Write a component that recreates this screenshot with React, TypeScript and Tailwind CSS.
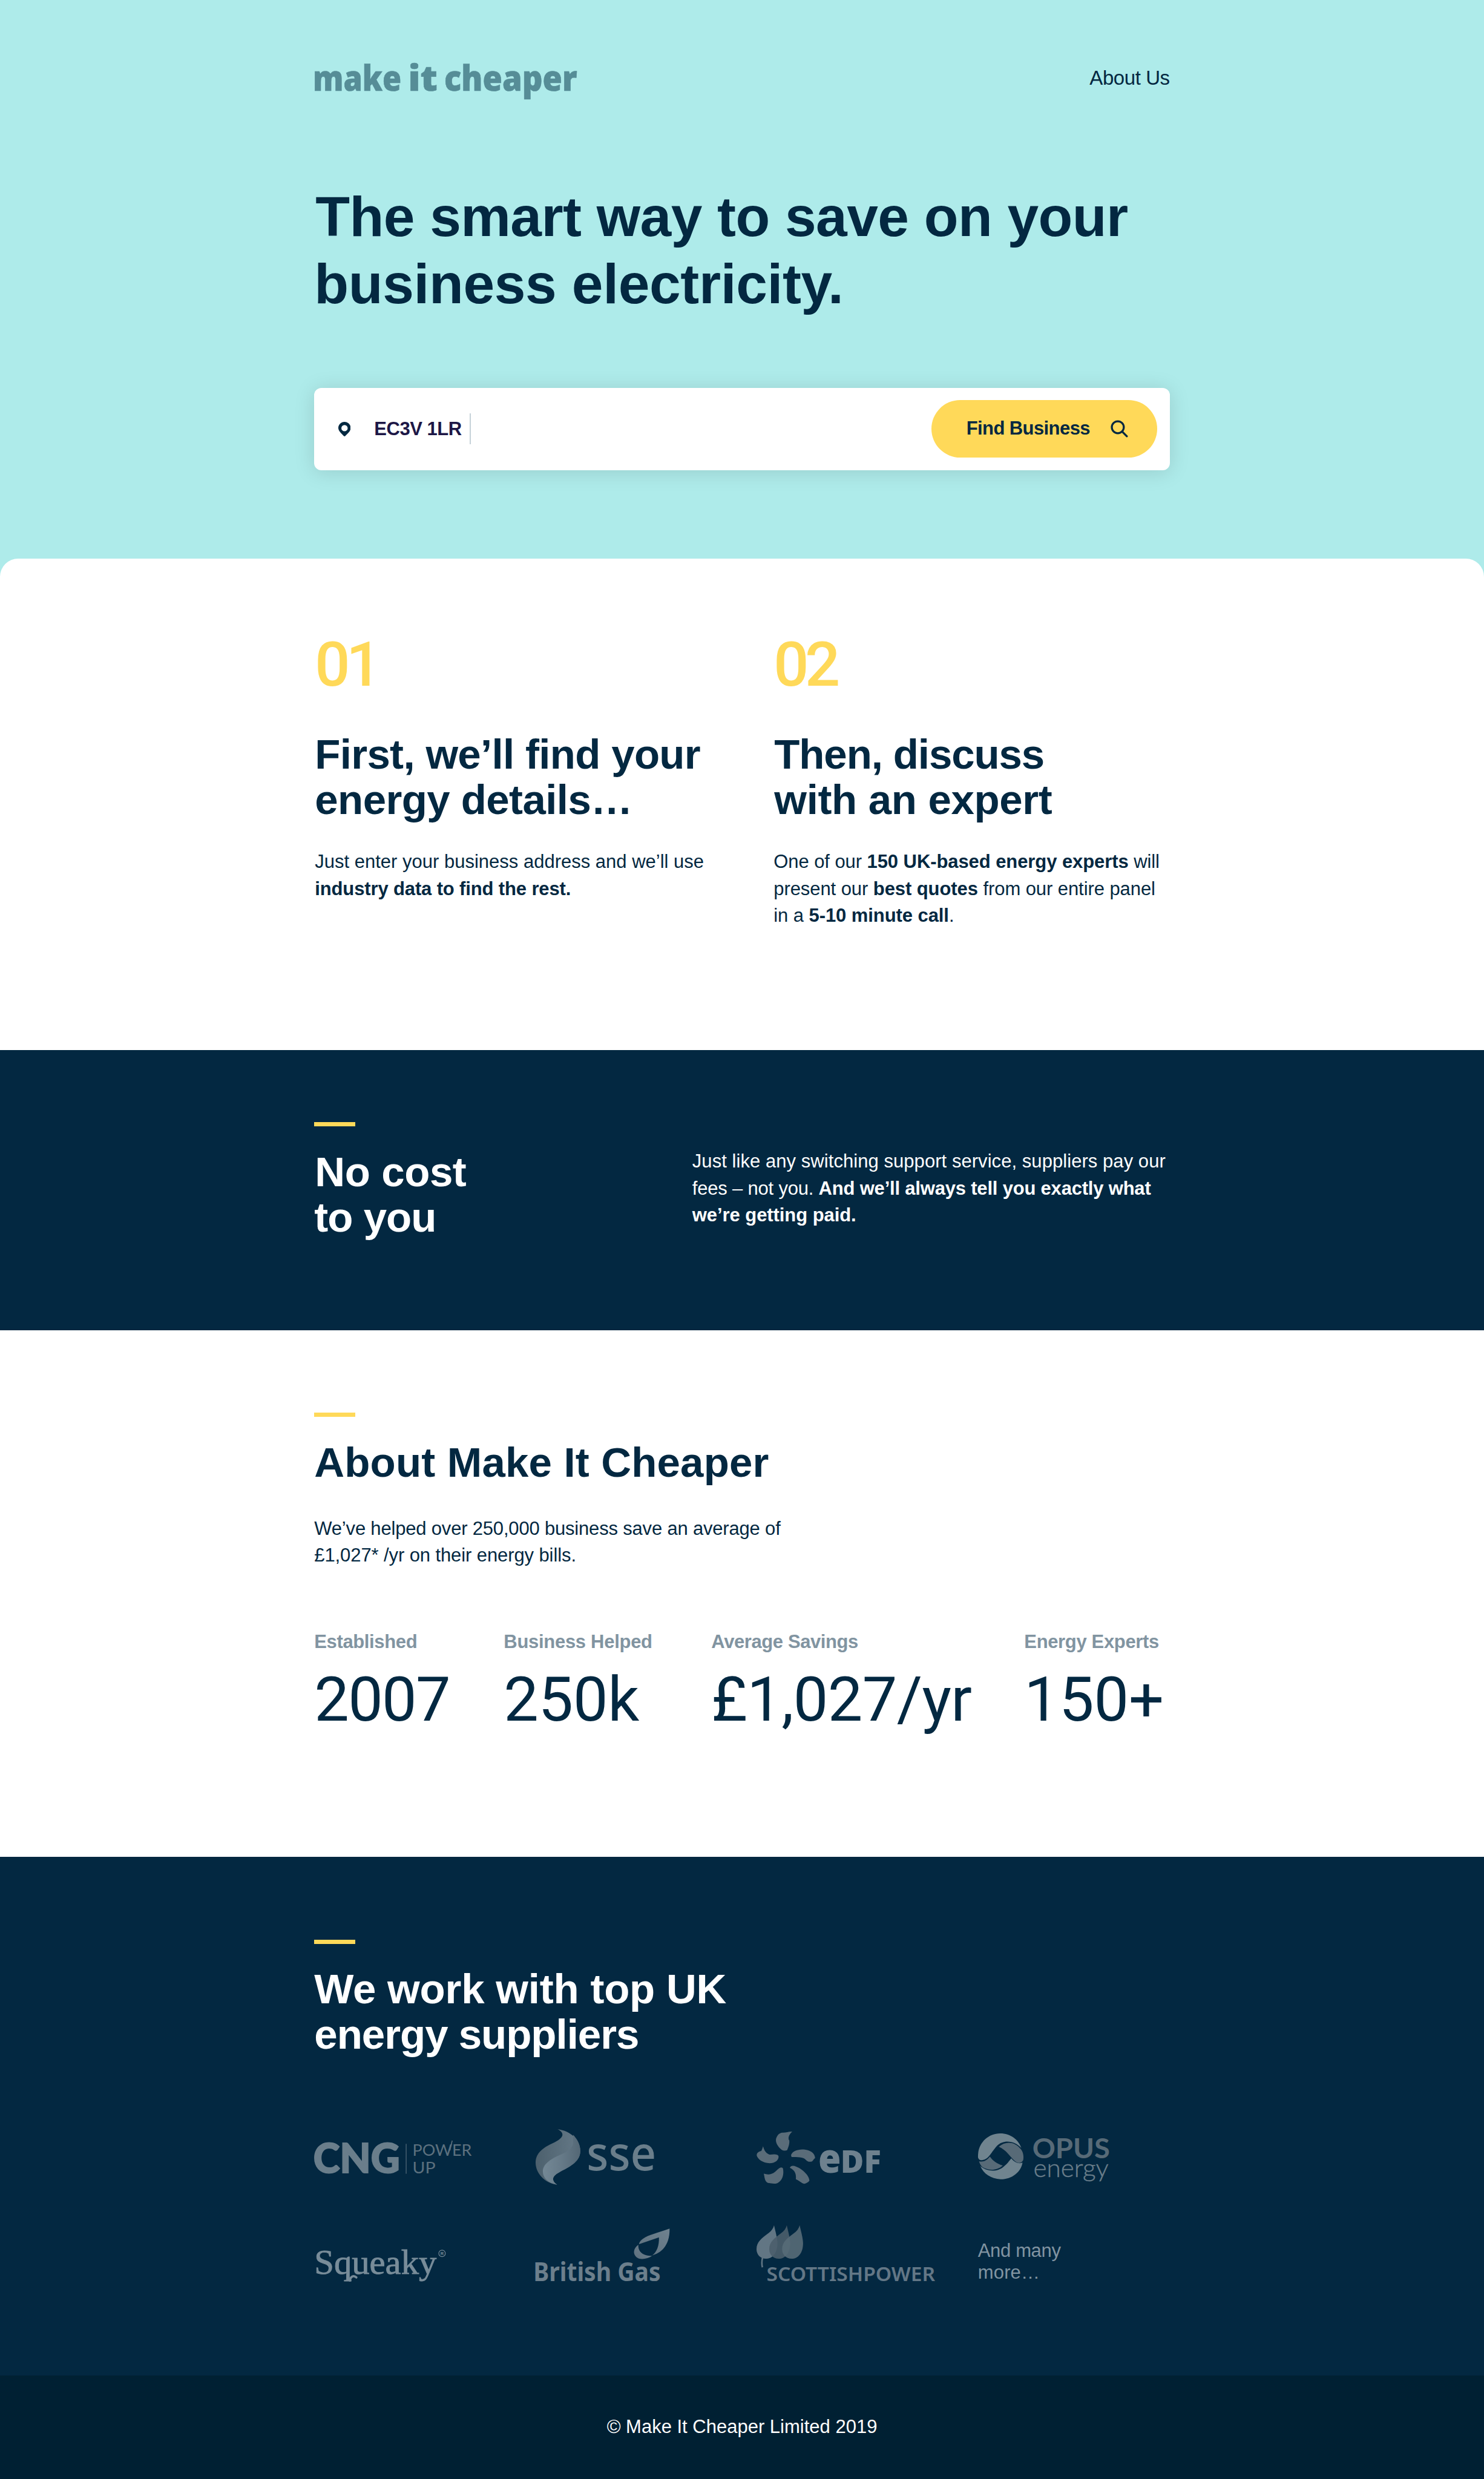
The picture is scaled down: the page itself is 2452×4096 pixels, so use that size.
import React from 'react';

const logoSvg = 'block h-[102.2px] w-[306.5px] overflow-visible';

function BrandLogo() {
  return (
    <svg viewBox="610 110 514 90" className="block h-[76.6px] w-[437.6px] overflow-visible" fill="#568d97" fontFamily="Noto Sans, sans-serif" fontWeight="900" fontSize="69">
      <text x="607.5" y="176.7" textLength="172" lengthAdjust="spacingAndGlyphs" stroke="#568d97" strokeWidth="0.8">make</text>
      <text x="792.5" y="176.7" textLength="57" lengthAdjust="spacingAndGlyphs" stroke="#568d97" strokeWidth="0.8">it</text>
      <text x="862.5" y="176.7" textLength="258" lengthAdjust="spacingAndGlyphs" stroke="#568d97" strokeWidth="0.8">cheaper</text>
    </svg>
  );
}

function CngLogo() {
  return (
    <svg viewBox="60 48 1080 360" className={logoSvg} fontFamily="Lato, sans-serif">
      <text x="56" y="320" fontSize="236" fontWeight="900" fill="#6a7e8b" stroke="#6a7e8b" strokeWidth="7" textLength="503" lengthAdjust="spacingAndGlyphs">CNG</text>
      <rect x="593" y="151" width="6" height="174" fill="#3d586a" />
      <g fill="#5c707e" fontSize="94">
        <text x="633" y="222" textLength="345" lengthAdjust="spacingAndGlyphs">POWER</text>
        <text x="633" y="324" textLength="134" lengthAdjust="spacingAndGlyphs">UP</text>
      </g>
      <path d="M850 190 L864 132" stroke="#5c707e" strokeWidth="6" />
    </svg>
  );
}

function SseLogo() {
  return (
    <svg viewBox="90 48 1080 360" className={logoSvg}>
      <defs>
        <linearGradient id="sseDark" x1="0" x2="1">
          <stop offset="0" stopColor="#4c606d" />
          <stop offset="1" stopColor="#667a88" />
        </linearGradient>
        <linearGradient id="sseLight" x1="0" x2="1">
          <stop offset="0" stopColor="#748895" />
          <stop offset="0.5" stopColor="#667a88" />
          <stop offset="1" stopColor="#536775" />
        </linearGradient>
      </defs>
      <path d="M218 66 C295 76 350 130 350 192 C350 255 290 283 225 318 C185 340 180 365 215 389 C140 378 90 320 90 260 C90 195 150 165 200 142 C245 120 268 92 218 66Z" fill="url(#sseDark)" />
      <path d="M308 150 C300 180 275 198 240 212 C175 240 132 270 132 312 C132 350 165 380 215 389 C180 365 185 340 225 318 C290 283 350 255 350 192 C350 150 328 118 308 98Z" fill="url(#sseLight)" />
      <text x="387" y="305" fontFamily="Noto Sans, sans-serif" fontSize="278" fontWeight="500" fill="#6a7e8b" textLength="405" lengthAdjust="spacingAndGlyphs">sse</text>
    </svg>
  );
}

function EdfLogo() {
  return (
    <svg viewBox="84 48 1080 360" className={logoSvg}>
      <g fill="#5a6c79">
        <path d="M292 80 C270 100 266 120 275 132 C277 150 270 170 262 188 Q245 195 230 185 C205 165 193 140 198 120 C205 100 215 90 232 86 C255 88 270 78 292 80Z" />
        <path d="M122 165 C130 195 145 212 165 214 C190 210 208 212 212 222 C215 240 200 262 160 264 C120 262 90 240 85 218 C85 200 100 195 112 192 Q118 180 122 165Z" />
        <path d="M126 325 C160 335 185 325 205 302 C220 285 235 285 238 295 C245 330 235 365 205 380 C185 387 165 380 150 378 C130 370 132 345 126 325Z" />
        <path d="M278 290 Q285 275 305 280 C350 295 390 335 392 365 C385 375 375 380 362 384 C345 380 330 362 313 357 C316 330 310 305 278 290Z" />
        <path d="M285 218 C288 200 310 186 350 184 C395 184 425 205 425 235 C415 240 415 250 405 254 C390 258 378 252 372 245 C355 225 320 230 288 228Z" />
      </g>
      <g fill="#6e818e" fontFamily="Open Sans, sans-serif" fontWeight="800">
        <text x="443" y="319" fontSize="240" textLength="132" lengthAdjust="spacingAndGlyphs">e</text>
        <text x="573" y="319" fontSize="182" textLength="236" lengthAdjust="spacingAndGlyphs">DF</text>
      </g>
    </svg>
  );
}

function OpusLogo() {
  return (
    <svg viewBox="114 48 1080 360" className={logoSvg} fontFamily="Lato, sans-serif">
      <g fill="#70848f">
        <path d="M114 230 C110 150 170 90 242 90 C300 89 350 125 366 175 C330 135 265 122 225 162 C190 200 175 245 135 246 Q118 246 114 230Z" />
        <path d="M308 236 C325 257 345 270 373 260 C365 315 310 358 245 357 C190 355 145 325 127 280 C160 312 225 318 262 285 C285 268 295 250 308 236Z" />
      </g>
      <g fill="#576a77">
        <path d="M235 168 C275 132 330 140 358 177 C378 195 381 225 377 245 C370 262 350 268 335 256 C305 235 285 190 235 168Z" />
        <path d="M183 225 C200 250 225 268 258 277 C225 308 175 308 140 287 C128 274 122 262 120 252 C145 260 168 245 183 225Z" />
      </g>
      <text x="430" y="235" fontSize="160" fontWeight="700" fill="#576a77" textLength="452" lengthAdjust="spacingAndGlyphs">OPUS</text>
      <text x="436" y="344" fontSize="148" fontWeight="300" fill="#6a7e8a" stroke="#6a7e8a" strokeWidth="1.5" textLength="438" lengthAdjust="spacingAndGlyphs">energy</text>
    </svg>
  );
}

function SqueakyLogo() {
  return (
    <svg viewBox="60 606 1080 360" className={logoSvg} fill="#788c99">
      <text x="61" y="908" fontFamily="Liberation Serif, serif" fontSize="198" stroke="#788c99" strokeWidth="3" textLength="712" lengthAdjust="spacingAndGlyphs">Squeaky</text>
      <path d="M268 948 C272 925 290 915 306 930" fill="none" stroke="#788c99" strokeWidth="13" strokeLinecap="round" />
      <circle cx="805" cy="790" r="19" fill="none" stroke="#788c99" strokeWidth="4" />
      <text x="796" y="799" fontFamily="Liberation Sans, sans-serif" fontSize="26" fontWeight="700">R</text>
    </svg>
  );
}

function BritishGasLogo() {
  return (
    <svg viewBox="90 606 1080 360" className={logoSvg}>
      <defs>
        <linearGradient id="gasFlame" x1="1" x2="0" y1="0" y2="1">
          <stop offset="0" stopColor="#6f828f" />
          <stop offset="1" stopColor="#5d707e" />
        </linearGradient>
      </defs>
      <g fill="url(#gasFlame)">
        <path d="M870 646 C800 672 745 683 718 703 C700 716 693 726 692 736 L808 697 C810 745 795 785 768 802 C815 790 872 750 870 646Z" />
        <path d="M688 740 C660 760 655 790 675 810 C695 830 740 824 768 804 C730 806 685 790 688 740Z" />
      </g>
      <text x="77" y="950" fontFamily="Noto Sans, sans-serif" fontSize="150" fontWeight="700" fill="#6c7f8c" textLength="741" lengthAdjust="spacingAndGlyphs">British Gas</text>
    </svg>
  );
}

const LEAF = 'M186 626 C196 670 205 700 206 730 C206 790 175 821 140 821 C105 821 84 795 84 765 C84 725 115 700 150 675 C170 660 182 645 186 626Z';

function ScottishPowerLogo() {
  return (
    <svg viewBox="84 606 1080 360" className={logoSvg}>
      <path d={LEAF} fill="#627684" />
      <path d={LEAF} transform="translate(74 0)" fill="#4b5e6c" fillOpacity="0.9" />
      <path d={LEAF} transform="translate(149 0)" fill="#586b78" fillOpacity="0.9" />
      <path d="M119 815 Q112 845 118 871" stroke="#627684" strokeWidth="9" fill="none" />
      <text x="142" y="953" fontFamily="Noto Sans, sans-serif" fontSize="112" fontWeight="600" fill="#637786" textLength="982" lengthAdjust="spacingAndGlyphs">SCOTTISHPOWER</text>
    </svg>
  );
}

function Accent() {
  return <div className="h-[7px] w-[68px] bg-[#ffd959]" />;
}

const h2 = 'text-[69px] font-bold leading-[74.92px] whitespace-nowrap';
const body = 'text-[31px] leading-[44.27px] whitespace-nowrap';
const container = 'mx-auto w-[1413.4px]';
const stepNumber = "font-['Roboto',sans-serif] text-[102.5px] font-medium leading-[104px] tracking-[-0.065em] text-[#ffd959]";

const stats = [
  { label: 'Established', value: '2007', width: 'w-[313px]', labelCls: 'tracking-[-0.0119em]', valueCls: 'tracking-[-0.017em]' },
  { label: 'Business Helped', value: '250k', width: 'w-[343px]', labelCls: 'tracking-[-0.0094em]', valueCls: 'tracking-[-0.003em]' },
  { label: 'Average Savings', value: '£1,027/yr', width: 'w-[517px]', labelCls: 'tracking-[-0.013em]', valueCls: 'tracking-[-0.006em]' },
  { label: 'Energy Experts', value: '150+', width: 'w-[240px]', labelCls: 'tracking-[-0.0112em]', valueCls: 'tracking-normal' },
];

export default function App() {
  return (
    <div className="w-full bg-[#aeebea] font-['Liberation_Sans',Arial,sans-serif] text-[#032841]">
      <header className="h-[923px] pt-[93px]">
        <div className={container}>
          <div className="flex items-start justify-between">
            <BrandLogo />
            <a className="mt-[13.5px] text-[33px] leading-[44px] tracking-[-0.0127em]">About Us</a>
          </div>
          <h1 className="mt-[133.5px] text-[93px] font-bold leading-[110.7px] whitespace-nowrap">
            <span className="block pl-[2px] tracking-[-0.0063em]">The smart way to save on your</span>
            <span className="block tracking-[-0.0041em]">business electricity.</span>
          </h1>
          <div className="mt-[116px] flex h-[136px] items-center rounded-[12px] bg-white pr-[20.5px] pl-[39.5px] shadow-[0_3px_34px_rgba(0,0,0,0.13)]">
            <svg viewBox="0 0 24 28" className="h-[24px] w-[20.5px]">
              <path fillRule="evenodd" fill="#032841" d="M12 0C18.6 0 24 5.2 24 11.8C24 17.6 18.5 22 13.3 27.4C12.6 28.1 11.4 28.1 10.7 27.4C5.5 22 0 17.6 0 11.8C0 5.2 5.4 0 12 0ZM12 6a6.1 6.1 0 1 0 0 12.2a6.1 6.1 0 1 0 0-12.2Z" />
            </svg>
            <span className="ml-[39px] text-[31px] font-bold leading-[44px] tracking-[-0.0158em] text-[#1d1746]">EC3V 1LR</span>
            <span className="ml-[13px] h-[51px] w-[2.5px] bg-[#c6d2d9]" />
            <button className="ml-auto flex h-[95.4px] w-[373px] items-center rounded-full bg-[#ffd959] pl-[57.5px]">
              <span className="text-[31px] font-bold leading-[44px] tracking-[-0.0189em]">Find Business</span>
              <svg viewBox="0 0 34 34" className="ml-[34px] h-[29px] w-[29px]" fill="none" stroke="#032841" strokeWidth="3.8" strokeLinecap="round">
                <circle cx="14" cy="14" r="11.6" />
                <path d="M22.5 22.5 L31.5 31.5" />
              </svg>
            </button>
          </div>
        </div>
      </header>

      <section className="h-[812px] rounded-t-[30px] bg-white pt-[122.5px]">
        <div className={`${container} flex`}>
          <div className="w-[759px] pl-px">
            <div className={stepNumber}>01</div>
            <h2 className={`${h2} mt-[60.5px]`}>
              <span className="block tracking-[-0.0099em]">First, we’ll find your</span>
              <span className="block tracking-[-0.0084em]">energy details…</span>
            </h2>
            <p className={`${body} mt-[42.5px]`}>
              <span className="block">Just enter your business address and we’ll use</span>
              <b className="block tracking-[-0.0044em]">industry data to find the rest.</b>
            </p>
          </div>
          <div>
            <div className={stepNumber}>02</div>
            <h2 className={`${h2} mt-[60.5px] pl-px`}>
              <span className="block tracking-[-0.0161em]">Then, discuss</span>
              <span className="block tracking-[-0.0049em]">with an expert</span>
            </h2>
            <p className={`${body} mt-[42.5px] tracking-[-0.0025em]`}>
              One of our <b>150 UK-based energy experts</b> will<br />
              present our <b>best quotes</b> from our entire panel<br />
              in a <b>5-10 minute call</b>.
            </p>
          </div>
        </div>
      </section>

      <section className="h-[463.3px] bg-[#032841] pt-[119.3px] text-white">
        <div className={container}>
          <Accent />
          <div className="mt-[36px] flex">
            <h2 className={`${h2} mt-[2.7px] w-[624.5px]`}>
              <span className="block pl-px tracking-[-0.006em]">No cost</span>
              <span className="block tracking-[-0.0141em]">to you</span>
            </h2>
            <p className={body}>
              <span className="block tracking-[0.0018em]">Just like any switching support service, suppliers pay our</span>
              <span className="block tracking-[-0.0064em]">fees – not you. <b>And we’ll always tell you exactly what</b></span>
              <b className="block tracking-[-0.0022em]">we’re getting paid.</b>
            </p>
          </div>
        </div>
      </section>

      <section className="h-[870.1px] bg-white pt-[136.2px]">
        <div className={container}>
          <Accent />
          <h2 className={`${h2} mt-[38.3px] tracking-[0.0025em]`}>About Make It Cheaper</h2>
          <p className={`${body} mt-[48.9px]`}>
            <span className="block tracking-[-0.006em]">We’ve helped over 250,000 business save an average of</span>
            <span className="block tracking-[-0.0032em]">£1,027* /yr on their energy bills.</span>
          </p>
          <div className="mt-[98.7px] flex">
            {stats.map((s) => (
              <div key={s.label} className={s.width}>
                <div className={`${body} font-bold text-[#8194a1] ${s.labelCls}`}>{s.label}</div>
                <div className={`mt-[21px] font-['Roboto',sans-serif] text-[102.5px] leading-[104px] whitespace-nowrap ${s.valueCls}`}>{s.value}</div>
              </div>
            ))}
          </div>
        </div>
      </section>

      <section className="h-[856.5px] bg-[#032841] pt-[136.2px] text-white">
        <div className={container}>
          <Accent />
          <h2 className={`${h2} mt-[38.3px]`}>
            <span className="block tracking-[-0.003em]">We work with top UK</span>
            <span className="block tracking-[-0.0146em]">energy suppliers</span>
          </h2>
          <div className="mt-[113.4px] grid grid-cols-[366px_364.5px_366px_310px] gap-y-[56.2px]">
            <CngLogo />
            <SseLogo />
            <EdfLogo />
            <OpusLogo />
            <SqueakyLogo />
            <BritishGasLogo />
            <ScottishPowerLogo />
            <p className="pt-[30px] text-[31px] leading-[35.8px] text-[#8194a1]">
              <span className="block tracking-[-0.0115em]">And many</span>
              <span className="block tracking-[0.0047em]">more…</span>
            </p>
          </div>
        </div>
      </section>

      <footer className="h-[171px] bg-[#002033] pt-[63.5px] text-center text-white">
        <p className="text-[31px] leading-[44.27px]">© Make It Cheaper Limited 2019</p>
      </footer>
    </div>
  );
}
